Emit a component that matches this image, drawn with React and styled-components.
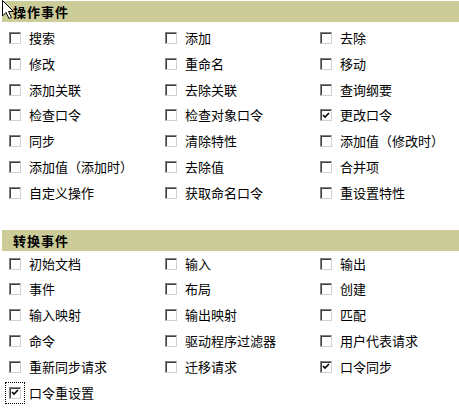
import React from 'react';
import styled, { createGlobalStyle } from 'styled-components';

const GlobalStyle = createGlobalStyle`
  html, body {
    margin: 0;
    padding: 0;
    background: #ffffff;
  }
  body {
    font-family: "Noto Sans CJK SC", "DejaVu Sans", sans-serif;
    font-size: 13px;
    color: #000000;
  }
`;

const SPage = styled.div`
  position: relative;
  width: 459px;
  height: 409px;
  overflow: hidden;
  padding: 1px 0 0 2px;
  box-sizing: border-box;
`;

const SSection = styled.section`
  margin-bottom: ${({ $gapBelow }) => $gapBelow || 0}px;
`;

const SSectionBar = styled.h2`
  margin: 0;
  height: 21px;
  padding-left: 11px;
  display: flex;
  align-items: center;
  background: #cccc99;
  font-size: 13px;
  font-weight: 700;
  letter-spacing: 1px;
  line-height: 1;
`;

const SGrid = styled.ul`
  list-style: none;
  margin: 0;
  padding: ${({ $top }) => $top}px 0 0 7px;
  display: grid;
  grid-template-columns: 156px 155px 1fr;
  grid-auto-rows: 25.8px;
`;

const SItem = styled.li`
  display: flex;
  align-items: flex-start;
  gap: 8px;
  white-space: nowrap;
`;

const SBox = styled.span`
  position: relative;
  flex: none;
  width: 12px;
  height: 12px;
  box-sizing: border-box;
  border-style: solid;
  border-width: 1px;
  border-color: #808080 #d4d0c8 #d4d0c8 #808080;
  box-shadow: inset 1px 1px 0 #404040;
  background: #ffffff;
  display: flex;
  align-items: center;
  justify-content: center;

  &::after {
    content: '';
    display: ${({ $focused }) => ($focused ? 'block' : 'none')};
    position: absolute;
    left: -5px;
    right: -5px;
    top: -6px;
    bottom: -6px;
    border: 1px dotted #000000;
  }
`;

const SLabel = styled.span`
  font-size: 13px;
  line-height: 13px;
  margin-top: -1px;
`;

const SCursor = styled.svg`
  position: absolute;
  left: 2px;
  top: 0;
  width: 13px;
  height: 19px;
`;

const operations = [
  ['搜索', '添加', '去除'],
  ['修改', '重命名', '移动'],
  ['添加关联', '去除关联', '查询纲要'],
  ['检查口令', '检查对象口令', '更改口令'],
  ['同步', '清除特性', '添加值（修改时）'],
  ['添加值（添加时）', '去除值', '合并项'],
  ['自定义操作', '获取命名口令', '重设置特性'],
];

const conversions = [
  ['初始文档', '输入', '输出'],
  ['事件', '布局', '创建'],
  ['输入映射', '输出映射', '匹配'],
  ['命令', '驱动程序过滤器', '用户代表请求'],
  ['重新同步请求', '迁移请求', '口令同步'],
  ['口令重设置'],
];

const checked = new Set(['更改口令', '口令同步', '口令重设置']);

function Check() {
  return (
    <svg width="8" height="7" viewBox="0 0 8 7">
      <path d="M1 3 L3 5 L7 1" fill="none" stroke="#000" strokeWidth="1.6" />
    </svg>
  );
}

function CheckItem({ label, focused }) {
  return (
    <SItem>
      <SBox $focused={focused}>{checked.has(label) && <Check />}</SBox>
      <SLabel>{label}</SLabel>
    </SItem>
  );
}

function EventSection({ title, rows, top, gapBelow, focusLabel }) {
  return (
    <SSection $gapBelow={gapBelow}>
      <SSectionBar>{title}</SSectionBar>
      <SGrid $top={top}>
        {rows.flat().map((label) => (
          <CheckItem key={label} label={label} focused={label === focusLabel} />
        ))}
      </SGrid>
    </SSection>
  );
}

export default function App() {
  return (
    <>
      <GlobalStyle />
      <SPage>
        <EventSection title="操作事件" rows={operations} top={10} gapBelow={17} />
        <EventSection title="转换事件" rows={conversions} top={7} focusLabel="口令重设置" />
        <SCursor viewBox="0 0 13 19">
          <polygon
            points="0.5,0.5 0.5,16 4,12.5 7,18.5 9.5,17.5 6.5,11.5 11.5,11.5"
            fill="#ffffff"
            stroke="#000000"
            strokeWidth="1"
          />
        </SCursor>
      </SPage>
    </>
  );
}
